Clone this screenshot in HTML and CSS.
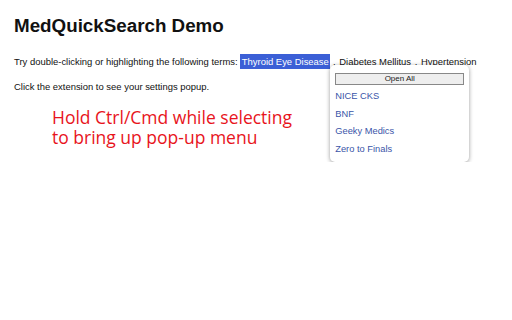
FILE: index.html
```html
<!DOCTYPE html>
<html>
<head>
<meta charset="utf-8">
<link rel="stylesheet" href="styles.css">
</head>
<body>
<main class="page">
  <h1 class="title">MedQuickSearch Demo</h1>
  <div class="line">Try double-clicking or highlighting the following terms: <span class="term-wrap"><span class="term selected">Thyroid Eye Disease</span><span class="popup">
        <span class="open-all">Open All</span>
        <a class="link" href="#">NICE CKS</a>
        <a class="link" href="#">BNF</a>
        <a class="link" href="#">Geeky Medics</a>
        <a class="link" href="#">Zero to Finals</a>
      </span></span> , <span class="term">Diabetes Mellitus</span> , <span class="term">Hypertension</span></div>
  <div class="line">Click the extension to see your settings popup.</div>
  <p class="note">Hold Ctrl/Cmd while selecting<br>to bring up pop-up menu</p>
</main>
</body>
</html>
```
FILE: styles.css
```css
html, body {
  margin: 0;
  padding: 0;
  background: #fff;
}
.page {
  padding: 15px 14px;
  font-family: "Liberation Sans", Arial, sans-serif;
  color: #111;
}
.title {
  margin: 0 0 18px;
  font-size: 18.8px;
  font-weight: bold;
  line-height: 22px;
}
.line {
  margin: 0 0 11px;
  font-size: 9.45px;
  line-height: 14px;
}
.term-wrap {
  position: relative;
}
.term {
  padding: 2px 1px;
}
.term.selected {
  padding: 2px 1.5px;
  background: #3b5fd6;
  color: #fff;
}
.popup {
  position: absolute;
  left: 90px;
  top: 9px;
  width: 139px;
  height: 97px;
  box-sizing: border-box;
  padding: 8px 5px 0;
  background: #fff;
  border-radius: 5px;
  box-shadow: 0 1px 4px rgba(0,0,0,0.4);
  display: flex;
  flex-direction: column;
  z-index: 2;
}
.open-all {
  display: block;
  height: 12px;
  flex: none;
  box-sizing: border-box;
  margin: 0 0 3px;
  font-size: 8px;
  line-height: 10px;
  text-align: center;
  color: #222;
  background: #eee;
  border: 1px solid #888;
}
.link {
  font-size: 9.3px;
  line-height: 17.5px;
  color: #3a55a8;
  text-decoration: none;
}
.note {
  margin: 13px 0 0 38px;
  font-family: "Open Sans", sans-serif;
  font-size: 17.5px;
  line-height: 20px;
  color: #e8141c;
}
```
